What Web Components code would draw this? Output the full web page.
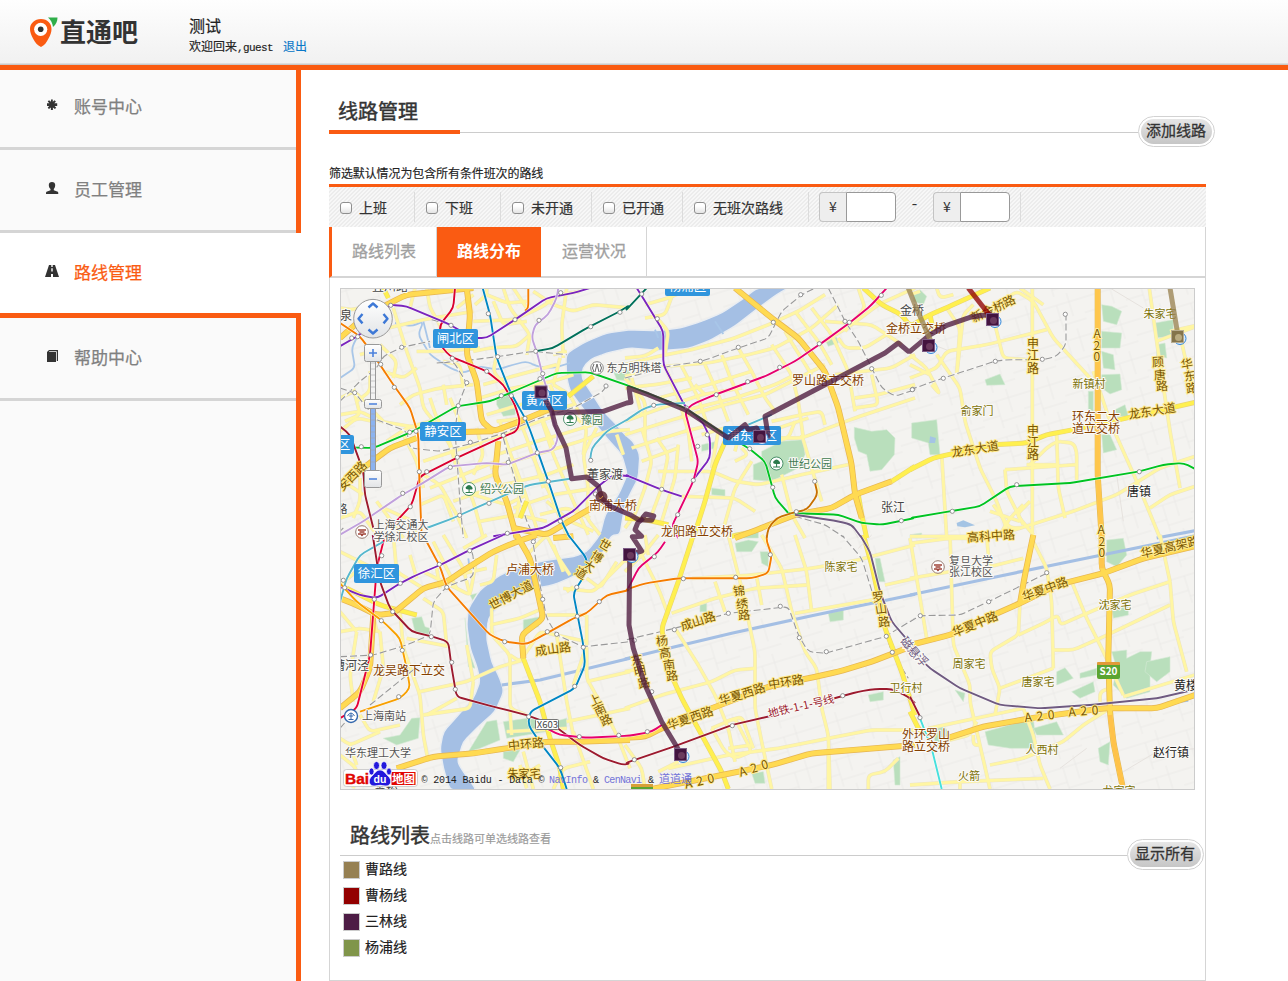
<!DOCTYPE html>
<html lang="zh-CN">
<head>
<meta charset="utf-8">
<title>线路管理 - 直通吧</title>
<style>
html,body{margin:0;padding:0;background:#fff}
body{font-family:"Noto Sans CJK SC",sans-serif;color:#333;width:1288px;height:981px;overflow:hidden}
</style>
</head>
<body>
<bus-app></bus-app>
<script>
const define = (name, html, setup) => customElements.define(name, class extends HTMLElement {
  constructor() {
    super();
    const t = document.createElement('template');
    t.innerHTML = html;
    this.attachShadow({mode: 'open'}).appendChild(t.content.cloneNode(true));
  }
  connectedCallback() { if (setup) setup(this, this.shadowRoot); }
});

define('app-header', `<style>
:host{display:flex;box-sizing:border-box;height:70px;border-bottom:5px solid #f95a10;background:linear-gradient(#fefefe,#f1f1f1 63px,#c9c9c9 64px);}
.logo{display:flex;width:189px;padding:16px 0 0 29px;box-sizing:border-box;color:#333}
.logo svg{width:31px;height:33px;flex:none}
.logo b{font-size:26px;line-height:30px;font-weight:700}
.who{padding-top:15px;white-space:nowrap}
.name{font-size:16px;line-height:20px;color:#222;-webkit-text-stroke:.2px}
.hi{font-size:12px;line-height:20px;color:#222;padding-top:1px;-webkit-text-stroke:.15px}
.hi span{font:11px/20px "Liberation Mono",monospace;letter-spacing:-.6px}
.hi a{color:#0a78c8;margin-left:10px;font-size:12px}
</style>
<div class="logo"><svg viewBox="0 0 31 33"><path d="M19 1.5h9.500c0 4-1.500 7-4.500 9.500-.5-4-2-7-5-9.500z" fill="#2fae4a"/><path d="M12 3C5.500 3 1 7.500 1 13c0 3 1.200 6 3 9.500 2 4 4.500 7 8 8.500 3.500-1.500 5.500-4.500 7.500-8.500 2-3.500 3-6.500 3-9.500C22.500 7.500 18.500 3 12 3z" fill="#fa5b12"/><circle cx="11.700" cy="13.300" r="6.600" fill="#fff"/><circle cx="11.700" cy="13.300" r="2.800" fill="#2e3335"/></svg><b>直通吧</b></div>
<div class="who"><div class="name">测试</div><div class="hi">欢迎回来<span>,guest</span><a>退出</a></div></div>`);

const ICONS = {
  cog: '<path d="M6 .5h1.800v2.300L9.600 1.200l1.300 1.300L9.300 4.300h2.900v2.600H9.600l1.600 1.900-1.300 1.300-2-1.700V11H5.900V8.500l-1.900 1.600-1.300-1.300 1.500-1.900H2V4.300h2.400L2.700 2.500 4 1.200l2 1.600z"/>',
  user: '<path d="M3.800 3C3.800 1 5 0 7 0s3.200 1 3.200 3c0 1.800-.7 3.300-1.400 3.900v1.400l4 1.400c.4.300.5 1.200.5 2.300H1c0-1.100.1-2 .5-2.300l4-1.400V6.900C4.600 6.300 3.800 4.800 3.800 3z"/>',
  road: '<path d="M4 0h2.300v2h1.400V0H10l4 12H8V9H6v3H0zM6.300 3.300v3.200h1.400V3.300z" fill-rule="evenodd"/>',
  book: '<path d="M2 2l2-2h9v11h-1.200V1.300H4.500L3.800 2H11v10H2z"/>'
};
define('nav-item', `<style>
:host{display:block;box-sizing:border-box;height:83px;background:#fafafa;border-right:5px solid #fa5b12;color:#808080;font-size:17px;line-height:26px;-webkit-text-stroke:.25px}
.row{display:flex;box-sizing:border-box;height:100%;border-bottom:3px solid #d5d5d5;padding:26px 0 0 45px}
:host([first]){height:80px}
:host([first]) .row{padding-top:23px}
:host([active]){height:85px;background:#fff;color:#fa5b12;border-right:0}
:host([active]) .row{border-bottom:5px solid #fa5b12}
svg{width:14px;height:12px;fill:#333;margin:6px 15px 0 0}
</style><div class="row"><svg viewBox="0 0 14 12"></svg><slot></slot></div>`, (el, r) => { r.querySelector('svg').innerHTML = ICONS[el.getAttribute('icon')]; });

define('side-nav', `<style>:host{display:flex;flex-direction:column;width:301px;flex:none}
.rest{flex:1;background:#fafafa;border-right:5px solid #fa5b12}</style>
<nav-item first icon="cog">账号中心</nav-item><nav-item icon="user">员工管理</nav-item><nav-item active icon="road">路线管理</nav-item><nav-item icon="book">帮助中心</nav-item><div class="rest"></div>`);

define('pill-button', `<style>:host{display:block;box-sizing:border-box;width:77px;height:31px;border:1px solid #d2d2d2;border-radius:16px;padding:2px;background:#fff;font-size:15px;line-height:22px;text-align:center;color:#333;-webkit-text-stroke:.3px;white-space:nowrap}
div{border-radius:13px;height:25px;background:linear-gradient(#e6e6e6,#c6c6c6)}
span{margin:0 -4px 0 -5px}</style><div><span><slot></slot></span></div>`);

define('filter-check', `<style>:host{display:flex;box-sizing:border-box;height:30px;align-items:center;font-size:14px;line-height:20px;-webkit-text-stroke:.2px;color:#333;padding:0 0 1px 11px;border-right:1px solid #dcdcdc;white-space:nowrap}
i{box-sizing:border-box;width:12px;height:12px;border:1px solid #8f8f8f;border-radius:3px;background:linear-gradient(#fff 30%,#e4e4e4);margin:3px 7px 0 0}</style><i></i><slot></slot>`);
define('price-input', `<style>:host{display:flex;box-sizing:border-box;width:77px;height:30px;font-size:14px}
span{box-sizing:border-box;width:27px;border:1px solid #c4c4c4;border-right:0;border-radius:4px 0 0 4px;background:#eee;text-align:center;line-height:26px;font-family:"Noto Sans CJK SC"}
i{box-sizing:border-box;flex:1;border:1px solid #999;border-radius:0 4px 4px 0;background:#fff}</style><span>¥</span><i></i>`);

define('filter-bar', `<style>
:host{display:flex;box-sizing:border-box;height:43px;border-top:3px solid #fa5b12;padding-top:5px;background:repeating-linear-gradient(135deg,#ececec 0 1.500px,#f7f7f7 1.500px 2.830px)}
.prices{display:flex;box-sizing:border-box;width:212px;height:30px;padding-left:10px;border-right:1px solid #dcdcdc;align-items:center}
.dash{width:37px;text-align:center;line-height:24px;font-family:"Liberation Mono",monospace;font-size:15px;padding-bottom:3px}
</style>
<filter-check style="width:86px">上班</filter-check><filter-check style="width:86px">下班</filter-check><filter-check style="width:91px">未开通</filter-check><filter-check style="width:91px">已开通</filter-check><filter-check style="width:126px">无班次路线</filter-check>
<div class="prices"><price-input></price-input><span class="dash">-</span><price-input></price-input></div>`);

define('tab-strip', `<style>
:host{display:flex;box-sizing:border-box;height:51px;border-bottom:2px solid #d5d5d5;border-right:1px solid #d5d5d5;border-left:3px solid #fa5b12;font-size:16px;line-height:47px;color:#a0a0a0;-webkit-text-stroke:.3px}
div{box-sizing:border-box;width:105px;text-align:center;border-right:1px solid #d5d5d5}
.on{width:104px;margin-right:1px;background:#fa5b12;color:#fff;font-weight:700;height:50px;border:0;-webkit-text-stroke:0}
</style><div>路线列表</div><div class="on">路线分布</div><div>运营状况</div>`);

define('legend-row', `<style>:host{display:flex;align-items:center;height:26px;font-size:14px;line-height:20px;color:#222;-webkit-text-stroke:.2px}
i{box-sizing:border-box;width:17px;height:18px;border:1px solid #ccc;margin:2px 5px 0 0}
span{padding-bottom:2px}</style><i></i><span><slot></slot></span>`,
 (el, r) => { r.querySelector('i').style.background = el.getAttribute('color'); });

/* ---------- map data: coordinates are thirds of a pixel inside each tile ---------- */
const TILES = {A:[340,288],B:[625,288],C:[910,288],D:[340,535],E:[625,535],F:[910,535]};
const pts = s => { let o, out = []; for (const t of s.trim().split(/\s+/)) { if (TILES[t]) { o = TILES[t]; continue; } const [x,y] = t.split(','); out.push([+(o[0]+x/3).toFixed(1), +(o[1]+y/3).toFixed(1)]); } return out; };
const line = s => 'M' + pts(s).map(p => p.join(' ')).join('L');
const smooth = s => { const p = pts(s); let d = 'M' + p[0].join(' '); for (let i = 1; i < p.length - 1; i++) { const a = p[i], b = p[i+1], q = p[i-1];
  const r = (u,v) => { const L = Math.hypot(v[0]-u[0], v[1]-u[1]) || 1, k = Math.min(5, L/2)/L; return [(u[0]+(v[0]-u[0])*k).toFixed(1), (u[1]+(v[1]-u[1])*k).toFixed(1)]; };
  d += 'L' + r(a,q).join(' ') + 'Q' + a.join(' ') + ' ' + r(a,b).join(' '); } return d + 'L' + p[p.length-1].join(' '); };

const RIVER = 'A 870,125 800,135 740,160 695,185 678,200 678,230 680,270 690,310 720,350 760,400 800,450 845,500 862,560 835,620 795,680 780,741 D 740,50 700,65 620,75 540,95 480,120 420,165 385,220 380,270 390,340 412,400 420,440 400,490 350,545 310,590 300,640 310,700 330,765 410,765 370,710 352,680 370,620 420,570 465,530 492,470 480,430 455,380 440,310 445,250 480,210 560,165 640,150 700,125 740,100 785,60 815,0 A 840,741 B 0,650 15,620 40,570 45,500 25,460 0,440 A 830,410 790,370 745,300 725,270 728,240 750,215 800,195 870,180 B 110,188 190,182 250,160 330,115 400,60 455,20 490,0 395,0 350,35 290,75 230,100 165,120 100,128 0,125';
const CANALS = ['E 0,372 150,335 320,295 560,242 870,178','F 0,180 260,125 550,65 870,0','D 485,450 600,435 870,370','C 740,750 870,725'];
const CREEKS = ['A 165,105 215,115 250,100 235,140 270,200 330,240 370,255 420,235 470,245 520,230 560,220 590,235 640,240 690,225','A 0,270 45,240 35,180 60,130','A 250,100 270,180','B 90,125 100,150','B 270,100 295,138','D 385,70 390,110'];
const GREENS = ['B 410,490 470,460 535,455 540,500 520,540 440,580 385,575 385,530 410,520','B 688,418 740,430 785,425 810,450 808,500 770,545 735,550 725,500 700,490 688,450','A 470,330 510,310 530,350 525,380 490,385 470,350','A 700,270 735,310 770,350 740,340 700,300','A 820,250 870,245 870,280 830,275','C 5,405 80,395 90,500 60,500 55,465 5,450','C 225,275 270,258 285,290 230,292','C 575,50 605,55 635,70 620,110 580,100','C 575,130 635,135 630,180 575,180','C 575,190 610,200 615,245 580,240','C 575,260 630,258 635,305 600,318 575,300','C 535,310 550,310 550,370 535,365','C 735,105 790,95 790,145 735,150','C 740,170 765,165 770,210 740,205','C 575,440 600,440 620,485 580,495','C 615,365 645,350 655,385 620,385','F 590,15 640,10 650,60 620,95 590,80','F 605,215 655,215 655,240 610,250','F 605,350 650,345 650,370 690,350 725,350 720,395 720,470 650,490 610,450 620,400','F 710,380 780,365 780,410 740,440 705,410','F 510,415 560,400 560,420 510,430','F 485,470 550,440 555,470 510,490','F 440,410 465,398 490,430 440,450','F 225,590 280,575 370,550 380,640 300,640 235,630','F 370,580 440,560 460,600 380,600','F 565,640 600,620 595,690 570,680','F 135,465 165,475 160,500','D 385,650 440,560 470,555 480,615 420,640','D 490,560 560,550 640,560 680,550 680,580 500,610','D 130,610 180,600 215,550 240,548 235,610 170,630','D 215,250 245,245 255,275 270,280 270,310 225,290','D 550,255 600,245 595,275 550,290','D 600,120 670,118 665,135 620,150 590,150','D 390,180 430,170 395,230 425,260 440,255 470,200 450,190 400,200','D 375,250 385,340 405,400 385,395','D 490,650 540,645 520,680 490,670','E 405,50 430,50 430,95 410,85','E 750,70 765,70 780,140 760,140','E 610,235 655,225 655,255 615,260','E 225,210 245,205 245,230 225,230','E 380,715 415,710 420,745 390,745','E 805,675 825,665 825,750 810,750','E 730,480 775,470 775,495 735,500','B 600,155 635,148 640,165 610,175','B 260,600 300,605 300,625 260,620','B 230,470 275,460 275,480 230,490','C 10,20 30,5 50,25 40,50 10,40','E 330,25 370,15 400,20 380,50 335,50','B 330,735 400,730 400,750 330,750','C 0,740 35,735 35,750 0,750','F 65,580 100,570 125,605 80,640'];
const PONDS = ['C 140,705 160,697 195,712 165,718 142,715','C 60,445 78,450 75,465 58,465','B 445,515 465,510 460,535 440,540','F 770,500 835,492 835,500 775,508'];
const MINOR = [
'A 0,60 40,65 115,45','A 60,60 65,110','A 160,60 200,190 240,300 250,360 290,410 330,470 350,540','A 210,60 225,0','A 100,130 250,95 400,70','A 260,0 270,60 300,110 310,180','A 405,50 440,20 440,0','A 440,20 500,45 560,40','A 400,100 520,95 600,60 660,20 720,10','A 400,190 450,180 530,175 570,140','A 640,200 680,190','A 490,0 510,60 570,140 560,200','A 660,210 640,290','A 680,0 665,110 670,210','A 0,380 60,370 120,400 240,420','A 0,330 45,310 80,350 130,400','A 90,250 90,310 50,340','A 40,300 60,380 15,400','A 130,250 190,270 230,240','A 180,350 220,320 300,300 400,290','A 310,290 320,350','A 270,330 290,390 320,440 350,520 400,640 430,750','A 310,220 360,230 370,300','A 230,190 310,190 420,180','A 500,300 460,250 470,200','A 430,290 500,270 650,230','A 420,330 520,300 640,280 700,260','A 440,380 540,350 660,320','A 580,280 610,400 640,470','A 630,290 660,360','A 640,290 690,320 720,380','A 470,400 560,390 700,350','A 480,400 490,440 550,600 600,750','A 540,400 560,450 580,510 640,640 680,740','A 600,380 640,500 700,640 745,740','A 460,450 600,400 640,385','A 470,500 590,460 660,440 760,410','A 450,540 620,490 720,460 800,430 870,425','A 490,590 620,560 700,530','A 250,520 400,470 480,440','A 270,600 370,560 470,520','A 340,640 480,590','A 250,560 300,590 350,680 380,750','A 240,650 310,620 340,700','A 190,440 230,520 250,600','A 130,660 220,700 230,750','A 110,640 140,680 190,750','A 10,580 70,620','A 0,690 60,670 110,740','A 520,660 640,620 770,600','A 600,680 680,660 750,690','A 770,420 730,500 745,600 740,690 780,740','A 830,440 850,500','A 40,690 60,640 60,570','A 700,380 740,420 730,500',
'A 0,430 50,390 100,400','A 140,460 200,420 270,400','A 380,440 350,380 330,330','A 410,420 430,500 400,560','A 380,590 460,560','A 400,620 500,650 560,620','A 510,520 540,610 530,690','A 580,500 610,600','A 420,700 530,680 620,700','A 620,640 690,700 760,730','A 350,60 400,20','A 120,170 170,220 160,270','A 60,200 130,180','A 460,40 490,110 560,100','A 580,10 640,50 700,70 760,50 870,60','A 520,0 560,60',
'B 0,230 100,205 200,185 330,150 430,110 520,70 600,20','B 0,265 120,235 250,225 370,200 450,180 560,120 640,50','B 0,300 90,290 200,270','B 0,400 110,360 230,320 350,300','B 0,440 160,390 300,350 420,320 520,270 600,230','B 20,480 180,430 260,410','B 50,520 160,480','B 0,210 60,205 100,180','B 60,50 130,30 200,0','B 98,92 130,130 120,200','B 150,0 120,80 60,90','B 120,235 160,330 190,430 200,520','B 170,235 220,330 250,420','B 240,230 280,320 310,400','B 290,200 320,280 370,380','B 340,180 380,250 420,330 450,370','B 440,170 500,260 520,340 535,450','B 480,130 510,180 560,260','B 510,70 580,160 620,230','B 560,60 620,140 670,250 690,370','B 600,100 740,110 830,170','B 600,160 680,110 760,50 870,0','B 660,130 720,60 700,0','B 640,150 660,180 720,180 800,130','B 630,260 800,240 870,200','B 690,330 760,320 870,290','B 690,360 760,350 740,260','B 440,400 530,380 590,370 600,410','B 330,490 340,450 530,450 690,390 870,330','B 330,520 370,500 350,480','B 230,440 300,420','B 100,550 260,550 330,580 400,590 530,560 670,530','B 50,420 80,520 60,600 30,680 0,720','B 95,450 130,500 110,600 80,680','B 160,470 150,570 110,700','B 170,625 330,630 390,670','B 380,520 330,600 290,740','B 530,440 560,540 590,640','B 470,560 500,680 540,750','B 400,440 550,390','B 450,460 490,450 510,400','B 0,270 60,340 60,450','B 20,270 50,380','B 190,365 330,330 450,290 510,260','B 100,330 250,290 380,250','B 210,290 240,320','B 280,430 260,540',
'C 0,200 50,240 90,320 65,290','C 0,270 80,240 110,190 230,170 410,125','C 110,60 150,120 140,260','C 140,260 160,80 190,50','C 80,200 150,300 165,400 210,540 260,640 300,750','C 250,90 280,210 350,215','C 250,60 320,10 370,40 430,150 540,270 550,280','C 330,0 400,50','C 367,0 367,750','C 550,250 600,400 680,580 750,750','C 718,0 740,160 780,430 810,600','C 780,130 870,110','C 740,160 860,115','C 810,140 830,230 860,340','C 95,500 110,750','C 285,545 500,530','C 285,545 290,610 340,710','C 360,530 410,480 440,460 490,465 500,490 500,575','C 440,440 445,600 465,690','C 870,500 750,540 620,620 490,670 300,730','C 720,660 780,620 870,590','C 340,650 300,690 270,740','C 360,640 320,680 370,740','C 240,670 330,700','C 250,650 300,720 330,720','C 0,745 180,745 270,740','C 0,20 30,10','C 80,0 90,30 130,20','C 440,530 350,530','C 0,230 60,260',
'D 0,50 80,90 120,110','D 0,290 60,280 120,290','D 0,230 50,290','D 50,290 30,420 40,500','D 120,290 130,400 100,500','D 250,190 310,230 320,330','D 180,230 190,340 240,480 250,600 265,680','D 200,310 330,335','D 240,470 380,440 480,395 550,375','D 250,540 390,520 400,440','D 260,540 350,490','D 310,0 370,100 390,180','D 250,110 390,180 410,70','D 160,0 170,110 250,160','D 280,20 350,160','D 370,40 440,0','D 420,150 460,140 470,60','D 450,270 540,250 610,220','D 455,220 455,300 510,360 510,520 560,540','D 510,360 540,380 600,290 740,320','D 560,60 620,0 650,60 690,120','D 640,30 670,110','D 670,160 760,170 870,60','D 680,170 700,155','D 740,130 780,160 830,80','D 600,240 740,240','D 650,300 680,500 700,600','D 740,240 740,430 790,520 830,600 870,700','D 740,330 700,450','D 740,440 870,410','D 680,560 870,520','D 510,530 515,600','D 500,590 680,580','D 700,590 760,762','D 380,330 400,440','D 0,610 30,630 120,590','D 30,630 50,690','D 60,540 90,590 180,570','D 350,120 440,100','D 520,740 600,690','D 550,650 580,762','D 640,762 670,700 750,680','D 100,240 110,290','D 290,100 300,160','D 0,150 60,100 130,110','D 210,60 230,130','D 560,760 540,690','D 0,660 50,700 40,760',
'E 310,0 350,160 390,350 390,520 410,620 440,762','E 410,0 470,100 500,230 540,350 575,400 590,520 610,600 615,762','E 510,0 545,110 560,230','E 140,235 270,190 390,160 545,150','E 200,130 380,120 560,100 700,75 870,30','E 50,60 100,160 130,240','E 0,110 60,50 100,0','E 60,0 70,60','E 270,140 300,230','E 395,125 410,210','E 510,235 740,195','E 780,150 870,130','E 150,280 220,390 270,480 310,580 330,680','E 390,400 330,405 260,440 110,480 0,520','E 0,410 50,400','E 260,580 330,550 340,570 380,650 330,670 300,650 260,580','E 300,560 350,545 385,640','E 310,640 380,630','E 130,700 310,660 460,640 610,610 740,585 870,585','E 0,630 50,700 60,762','E 610,640 610,762','E 730,762 730,720 780,710 820,670','E 100,710 160,680','E 0,80 40,60',
'F 0,10 50,310','F 120,0 130,330 180,450 180,500 240,762','F 230,0 235,60 240,90','F 0,25 120,10 230,10','F 0,130 120,110','F 370,20 410,100 425,200 430,400','F 240,95 340,70','F 330,200 325,300 240,350 245,400 270,460 255,540','F 325,300 400,265 445,240 450,270 530,235 660,180 780,140','F 430,345 490,345 570,310 780,210','F 485,140 530,250 580,350 640,480','F 270,460 430,400','F 780,140 750,0','F 780,140 790,260 830,410','F 640,485 870,415','F 55,580 340,520','F 190,600 190,630 210,630','F 340,520 370,600 390,690 420,762','F 240,690 340,670 460,620 520,570 600,520','F 0,750 150,740 400,730','F 100,620 180,600 200,560','F 150,745 150,762','F 570,500 570,470 600,460'];
const STREETS = ['B 700,750 670,700 600,690','A 300,120 330,160','A 0,180 100,80','E 740,0 700,40','F 640,710 740,650 870,640','F 450,700 530,640','C 20,150 120,190','C 600,0 700,60','C 620,560 640,700'];
const MAJOR = ['B 715,0 770,50 830,80 C 0,115 60,80 130,50 240,0','C 70,130 60,80','B 305,450 270,530 240,640 205,750 E 205,0 160,140 110,280 130,400 170,490 230,600 290,710 310,762','C 0,545 70,510 250,470 350,465 410,440 490,425 650,390 870,340','A 685,325 760,265','B 390,730 320,745','A 145,30 130,0','D 550,370 600,500 630,610 660,700 670,762','E 715,0 740,90 760,180 780,280 830,410 870,540','D 20,160 120,210 230,240','B 700,620 710,680 725,750','B 800,580 870,535','A 540,690 560,640','F 0,530 30,590 80,600','B 0,690 60,695 130,710'];
const HIGH = ['A 0,150 80,80 200,20 400,0','A 380,0 390,80 380,200 410,280 425,400 460,430 540,400 660,350','A 460,430 350,432 260,430','A 0,590 70,540 150,480 230,450','A 475,460 465,560 500,640 530,750','D 0,190 50,210 110,240 160,235 250,160 320,140 380,100 460,50 530,20 590,0','D 530,0 570,70 590,160 610,250 545,300 550,370','A 520,720 620,740 720,680 790,640','B 330,0 440,90 520,150 600,250 640,360 680,530 690,620 710,690','B 330,750 410,720 510,680 620,660 690,620 800,580','C 563,0 563,560 575,750 F 575,100 600,150 595,370 600,530 610,620 640,765','D 0,520 60,470 90,400 100,240','D 170,700 280,665 400,655 500,640 620,620 720,620 870,615','E 0,608 60,605 110,580 260,520 430,455 550,430 640,410 740,380 870,330','F 0,330 120,300 250,240 330,205 440,150 580,115 700,70 870,30','F 370,0 345,120 330,205','E 80,762 280,722 440,690 560,655 870,630','F 110,610 220,575 360,550 580,520 740,520 870,475','A 700,745 640,750'];
const SUBWAY = [
['#d9002f','A 345,0 340,60 300,110 300,170 330,205 440,250 490,290 525,350 540,400 530,430 480,450 350,510 240,565 215,650 160,710'],
['#e60039','D 135,0 110,100 90,360 50,520 0,550'],
['#0086c3','A 428,0 450,80 470,210 510,310 560,400 575,440 625,580 665,700 690,750','D 685,0 740,70 740,110 700,175 730,330 735,390 705,460 570,530 565,570 605,630 660,700 680,762'],
['#f57c00','A 0,105 60,145 100,200 160,290 210,360 235,440 238,570 245,750','A 565,0 565,60 555,68','D 260,20 300,95 320,155 450,300 495,320 560,328 620,295 700,250 740,235 800,180 870,165 E 0,165 60,145 160,130 380,130 430,115 440,60 425,20 425,0'],
['#7a24bd','A 0,175 60,140 150,50 200,55 330,110 400,150 440,150 525,95 620,30 700,15 750,0','A 460,745 610,720 700,670 780,590 820,560 870,565 B 0,560 110,605 170,625','D 0,155 60,180 110,190 180,145 230,120 300,90 390,45 490,0','B 35,0 60,40 115,130 115,230 180,355 235,405 255,450 255,510 205,575'],
['#00c322','A 0,478 100,480 220,430 350,355 450,340 510,315 650,255 750,253 870,295 B 180,360 300,440 370,480 420,520 440,590 450,630 490,675','B 490,675 640,680 710,705 770,710 870,690 C 0,690 120,670 210,655 300,595 480,585 690,550 760,530 820,525 860,545'],
['#c0a0dc','A 655,0 650,30 625,80 585,110 575,150 590,190 610,270 620,300 635,380 655,450 640,485 590,495 500,530 440,525 330,535 240,590 180,625 70,700 0,740'],
['#00705a','A 587,190 640,180 740,120 840,70 870,50 B 0,70 65,0'],
['#56b7cd','A 750,520 755,480 800,430 870,390 B 0,400 50,365 90,350 180,345','A 690,572 570,590 520,610 430,650 340,690 260,720','B 370,410 440,380','D 130,20 60,60 20,130 0,200'],
['#9c1a2e','A 0,415 30,440 70,550 75,620 100,720','D 98,0 120,140 150,220 215,290 280,305 325,320 335,400 350,485 460,515 560,540 640,570 720,630 790,670 850,690 870,685 E 0,685 160,630 320,570 450,540','E 620,492 700,470 750,462 800,462 850,485 870,505','F 0,485 30,545'],
['#e6006e','B 160,750 140,715 205,580 220,520 180,370 200,350 270,320 420,265 510,220 590,165 680,100 740,50 785,0','A 870,0 870,1','E 120,20 100,50 40,100 10,160','D 620,580 660,600 740,608 870,602 E 80,590 110,570'],
['#f8a000','D 0,145 50,200 130,260 180,310 200,400 210,460 180,490 60,530'],
['#c87000','B 570,585 578,620 545,665 500,675 455,690 430,720 425,750'],
['#6f5a80','B 510,680 640,700 680,710 710,750 E 705,0 735,50 765,170 800,260 860,330 F 20,360 60,400 150,460 270,510 390,520 540,510 740,490 870,460'],
['#46e0dd','F 30,550 65,640 95,762']];
const RAILS = ['A 0,340 60,280 110,240 130,205 185,178 270,160','A 290,225 400,215 480,205 580,190 680,200','A 310,225 340,220 380,285 355,350 345,430 360,640 370,750','A 110,395 200,430 210,480 300,490 400,465 490,435 600,390 700,360 790,310 800,290','A 275,95 330,110','A 490,450 560,700 590,762','A 0,300 45,315 110,395','B 0,270 40,260 130,235 230,220 340,180 430,150 470,70 530,20 570,0','B 610,0 660,100 700,160 740,240 770,300 810,325 870,305','C 0,305 100,270 255,220 290,215 400,215 440,205 468,170 468,80','D 0,365 100,360 200,330 270,300 280,200 320,155 400,125 400,60 390,40','D 575,0 600,150 620,250 650,300 730,335 870,320 E 0,315 150,280 310,235 400,225 490,215 520,300 550,350 600,355 780,305 870,250','F 0,260 30,242 150,240 235,200 410,115','B 510,685 600,710 660,750 E 650,0 710,70 760,230 800,350 850,430','D 90,510 250,380','A 10,720 0,730','D 0,580 30,545'];
const STOPS = 'A 152,52 333,112 445,77 525,95 662,14 597,97 752,116 840,73 185,178 337,211 440,250 473,206 587,190 122,229 163,298 380,284 44,314 600,272 608,257 484,323 514,323 355,353 555,391 391,463 490,442 209,433 228,430 64,476 352,508 592,494 752,517 505,523 331,538 238,551 260,551 188,616 211,656 447,646 359,682 625,580 661,700 502,736 766,618 798,294 35,150 53,146 B 50,18 97,92 445,103 527,20 660,100 673,103 769,22 583,167 340,178 226,220 464,238 368,281 274,320 184,360 86,352 740,242 863,304 247,440 218,475 374,482 443,598 205,577 110,604 158,680 569,580 514,671 829,698 C 466,79 397,214 256,220 100,271 7,305 320,590 127,670 688,551 D 580,20 389,47 125,62 298,88 10,136 14,158 181,145 320,157 103,193 158,230 608,193 710,157 778,200 124,257 712,244 187,346 274,305 92,360 335,382 494,320 622,290 650,298 730,337 346,463 176,485 704,454 566,545 718,605 836,601 662,698 E 88,65 436,59 332,127 175,131 466,214 310,235 148,284 28,316 523,308 604,350 784,304 802,352 653,482 80,470 322,572 67,590 28,674 F 410,113 236,200 31,242 30,548';

const K='#444',BR='#853f00',RD='#7a5600',OL='#7d7208',PO='#555';
const LABELS = [['宜川路',390,287,K,12],['泉',346,316,K,12],['董家渡',605,475,K,12],['张江',893,508,K,12],['唐镇',1139,492,'#222',12],['赵行镇',1171,753,'#222',12],['黄楼',1186,686,'#222',12],['漕河泾',351,666,K,12],['路',342,509,K,11],['金桥',912,311,K,12],
['东方明珠塔',634,368,PO,11],['豫园',592,420,'#3f7a50',11],['绍兴公园',502,489,'#3f7a50',11],['世纪公园',810,464,'#3f7a50',11],['上海交通大',401,525.5,PO,11],['学徐汇校区',401,537,PO,11],['上海南站',384,716,PO,11],['华东理工大学',378,753,PO,11],['复旦大学',971,561,PO,11],['张江校区',971,572,PO,11],
['南浦大桥',613,506,BR,12],['卢浦大桥',530,570,BR,12],['龙吴路下立交',409,671,BR,12],['龙阳路立交桥',697,532,BR,12],['罗山路立交桥',828,381,BR,12],['金桥立交桥',916,329,BR,12],['环东二大',1096,417,BR,12],['道立交桥',1096,429,BR,12],['外环罗山',926,735,BR,12],['路立交桥',926,747,BR,12],
['陈家宅',841,567,OL,11],['卫行村',906,688,OL,11],['俞家门',977,411,OL,11],['新镇村',1089,384,OL,11],['朱家宅',1160,314,OL,11],['沈家宅',1115,605,OL,11],['周家宅',969,664,OL,11],['唐家宅',1038,682,OL,11],['人西村',1042,750,OL,11],['火箭',969,776,OL,11],['龙家宅',1119,791,OL,11],['朱家宅',524,774,RD,11],['莘松',386,791,K,12],
['世博大道',511,595,RD,12,-28],['成山路',553,649,RD,12,-8],['安西路',352,476,RD,12,-45],['中环路',526,744,RD,12,-6],['成山路',698,621,RD,12,-18],['华夏西路',690,718,RD,12,-19],['华夏西路',742,694,RD,12,-17],['中环路',786,682,RD,12,-9],['龙东大道',975,449,RD,12,-9],['龙东大道',1152,411,RD,12,-9],['高科中路',991,536,RD,12,-4],['华夏高架路',1170,547,RD,12,-13],['华夏中路',1045,589,RD,12,-20],['华夏中路',975,624,RD,12,-22],['地铁-1-1-号线',801,706,'#9c1a2e',11,-13],['A 2 0',1040,716,RD,12,-6,1],['A 2 0',1084,711,RD,12,-4,1],['A 2 0',754,768,RD,12,-17,1],['A 2 0',700,781,RD,12,-13,1]];
const VERT = [['申江路','1033,344 1033,356 1033,369'],['申江路','1033,431 1033,443 1033,455'],['A20','1097,334 1097,346 1097,357'],['A20','1101,530 1102,542 1102,553'],['顾唐路','1158,362 1160,375 1162,386',-4],['华东路','1187,364 1190,376 1192,388',-10],['锦绣路','739,591 742,604 744,615',-5],['杨高南路','662,641 665,653 669,665 672,676',-8],['东明路','637,660 640,671 644,683',-12],['罗山路','878,597 881,609 884,622',-8],['上南路','595,700 600,710 606,720',-25],['世博大道','605,545 597,557 589,566 581,573',32],['新金桥路','977,316 988,311 999,306 1009,301',-25],['磁悬浮','907,643 914,652 922,660',50]];
const BADGES = [['闸北区',433,329,45],['静安区',420,422,46],['黄浦区',522,391,45],['浦东新区',723,426,58],['杨浦区',665,277,45],['徐汇区',354,564,45],['长宁区',309,435,45]];
const ROUTES = [['#4d1a3d','A 605,315 635,370 645,410 678,480 695,572 740,567 775,595 785,630 810,655 870,680 B 40,695 80,697 86,684 62,678 52,690','B 55,690 38,705 30,725 50,745 E 22,5 50,48 14,58 12,270 25,340 60,450 110,560 170,660','A 635,375 720,372 790,370 860,345 B 18,343 12,300 70,320 180,365 310,450 360,410 370,425 395,420 405,445 430,445 420,385 600,290 780,195 820,165 850,190 C 0,190 60,140 110,112 180,88 245,78'],['#8f0000','C 175,0 247,92'],['#9a8352','B 850,0 870,50 C 65,165','C 780,0 805,148']];
const MARKS = [[541.5,392.5],[993,320],[929,346],[760,437],[630,555],[681,755],[1178,337,1]];

define('route-map', `<style>:host{display:block;box-sizing:border-box;width:855px;height:502px;border:1px solid #ccc;overflow:hidden}
svg{display:block;width:853px;height:500px;font-family:"Noto Sans CJK SC",sans-serif}
path{stroke-linejoin:round}.mono{font-family:"Liberation Mono",monospace}</style><svg viewBox="341 289 853 500"></svg>`, (el, r) => {
  const T = (s,x,y,c,z,rot=0,hi=0) => `<text x="${x}" y="${y+z*.36}" font-size="${z}" fill="${c}" text-anchor="middle" ${rot?`transform="rotate(${rot} ${x} ${y})"`:''} ${hi?'letter-spacing="1"':''} stroke="${c===RD?'#ffe98a':'#fbfaf7'}" stroke-width="2" stroke-linejoin="round" paint-order="stroke">${s}</text>`;
  const P = (d,c,w,x='') => `<path d="${d}" fill="none" stroke="${c}" stroke-width="${w}" ${x}/>`;
  let h = `<defs><pattern id="lot" width="43" height="37" patternUnits="userSpaceOnUse" patternTransform="rotate(-17)"><path d="M0 9H43M0 24H18M18 9V37M31 0V24M18 30H43" stroke="#eae8e6" stroke-width=".8" fill="none"/></pattern></defs><rect x="340" y="288" width="856" height="503" fill="#f4f3f0"/><rect x="340" y="288" width="856" height="503" fill="url(#lot)"/>`;
  h += GREENS.map(g => `<path d="${line(g)}Z" fill="#b9dfbc" stroke="#d5ead5" stroke-width=".6"/>`).join('');
  h += `<path d="${smooth(RIVER)}Z" fill="#a4bfe4" stroke="#e9edf2" stroke-width="1.500"/>`;
  h += PONDS.map(g => `<path d="${line(g)}Z" fill="#a4c4e4"/>`).join('');
  h += CANALS.map(c => P(line(c),'#a4bfe4',3.2)).join('') + CREEKS.map(c => P(smooth(c),'#a8c6e8',1.8)).join('');
  h += STREETS.map(c => P(smooth(c),'#e6e2de',1)).join('');
  h += MINOR.map(c => P(smooth(c),'#ece4c4',3.8)).join('') + MINOR.map(c => P(smooth(c),'#fff6a3',2.8)).join('');
  h += RAILS.map(c => P(smooth(c),'#f7f6f4',2)+P(smooth(c),'#999',1.1,'stroke-dasharray="7 3"')).join('');
  h += MAJOR.map(c => P(smooth(c),'#e9d573',5)).join('') + MAJOR.map(c => P(smooth(c),'#fff04f',3.8)).join('');
  h += HIGH.map(c => P(smooth(c),'#e6b552',6)).join('') + HIGH.map(c => P(smooth(c),'#ffda52',4.6)).join('');
  h += P(line('C 563,0 563,560 575,750 F 575,100'),'#ffc64c',4.4) + P(line('F 600,540 612,630 640,765'),'#ffc24a',4.4);
  for (const [c, ...ls] of SUBWAY) for (const l of ls) h += P(smooth(l),'#fff',3,'opacity=".7"') + P(smooth(l),c,1.9);
  h += pts(STOPS).map(p => `<circle cx="${p[0]}" cy="${p[1]}" r="2.100" fill="#fff" stroke="#888" stroke-width=".9"/>`).join('');
  h += BADGES.map(([s,x,y,w]) => `<rect x="${x}" y="${y}" width="${w}" height="19" rx="2" fill="#3095dd"/><text x="${x+w/2}" y="${y+14}" font-size="12.500" fill="#fff" text-anchor="middle">${s}</text>`).join('');
  h += LABELS.map(l => T(...l)).join('');
  h += VERT.map(([s,p,a=0]) => {
    const q = p.split(' ').map(v => v.split(',').map(Number)), m = s==='磁悬浮', w = s==='A20' ? 3.5 : 6, k = a*Math.PI/180;
    const ox = w*Math.cos(k)+4.3*Math.sin(k), oy = w*Math.sin(k)-4.3*Math.cos(k);
    return `<text x="${q.map(v=>(v[0]-ox).toFixed(1)).join(' ')}" y="${q.map(v=>(v[1]-oy).toFixed(1)).join(' ')}" ${a?`rotate="${a}"`:''} font-size="12" fill="${m?'#6f5a80':RD}" stroke="${m?'#fbfaf7':'#ffed9a'}" stroke-width="2" paint-order="stroke">${s}</text>`; }).join('');
  h += `<rect x="535.500" y="719.500" width="23" height="10" rx="1" fill="#fff" stroke="#777"/><text x="547.500" y="728" font-size="9.500" fill="#444" text-anchor="middle">X603</text><rect x="1097" y="663" width="23" height="16" rx="2" fill="#5ba531"/><rect x="1097" y="662" width="23" height="3" rx="1" fill="#e29a38"/><text x="1108.500" y="675" font-size="10" font-weight="700" fill="#fff" text-anchor="middle">S20</text><rect x="631" y="784" width="22" height="9" rx="2" fill="#5ba531"/><rect x="631" y="784" width="22" height="3" fill="#d8a038"/>`;
  for (const [x,y] of [[570,419],[469,489],[776.5,463.5]]) h += `<circle cx="${x}" cy="${y}" r="6.500" fill="#fff" stroke="#38825a" stroke-width=".9"/><path d="M${x-3} ${y-2}q3-4 6 0q2 3-2.400 2.500V${y+3}h3v1h-7v-1h3v-2.500q-4 0-2.600-3z" fill="#2b7a4c"/>`;
  for (const [x,y] of [[362,532],[938,567]]) h += `<circle cx="${x}" cy="${y}" r="6.300" fill="#fff" stroke="#96786e"/><path d="M${x-4} ${y-2}h8M${x-2.500} ${y}h5M${x-4} ${y+2}h3l1 1.500 1-1.500h3" stroke="#a04438" stroke-width="1.500" fill="none"/>`;
  h += `<circle cx="597" cy="368" r="6.300" fill="#fff" stroke="#888"/><path d="M594 364q-3 4 0 8M600 364q3 4 0 8M595 372l2-8 2 8" stroke="#666" fill="none"/><circle cx="351" cy="716" r="6.500" fill="#fff" stroke="#3468ad" stroke-width="1.400"/><path d="M347.500 716q3.500-6 7 0M351 713v6M348.500 719.500h5M349 716h4" stroke="#3468ad" fill="none"/>`;
  for (const [c, ...ls] of ROUTES) for (const l of ls) h += P(line(l),c,5,'opacity=".78"');
  h += `<circle cx="601.500" cy="497" r="6" fill="#5b2430" opacity=".8"/><path d="M599 498q2 2 4-2" stroke="#d0903a" fill="none"/>`;
  h += MARKS.map(([x,y,t]) => `<circle cx="${x+2}" cy="${y+1.500}" r="6" fill="#d9eaff" stroke="#3588d8"/><rect x="${x-6.500}" y="${y-6.500}" width="12" height="12" fill="${t?'#84744b':'#43143f'}" stroke="${t?'#b8ad91':'#7d5c85'}"/><circle cx="${x+.5}" cy="${y+.5}" r="3.500" fill="${t?'#b9ab81':'#6b3a5e'}"/>`).join('');
  h += `<defs><linearGradient id="wheel" x1="0" y1="0" x2="0" y2="1"><stop stop-color="#fff"/><stop offset="1" stop-color="#e2e4e6"/></linearGradient></defs><circle cx="373" cy="318.700" r="19.300" fill="url(#wheel)" stroke="#9a9a9a"/><path d="M368.500 307.500l4.500-4 4.500 4M368.500 329.500l4.500 4 4.500-4M362.500 314l-4 4.700 4 4.700M383.500 314l4 4.700-4 4.700" fill="none" stroke="#3d78d6" stroke-width="2.400"/>
<rect x="370.500" y="360" width="5" height="113" fill="#f2f2f2" stroke="#999"/><rect x="371" y="408" width="4" height="64" fill="#8cb3f0"/><path d="M371 363h4M371 369h4M371 375h4M371 381h4M371 387h4M371 393h4M371 414h4M371 420h4M371 426h4M371 432h4M371 438h4M371 444h4M371 450h4M371 456h4M371 462h4" stroke="#aaa" stroke-width=".6"/>
<g fill="url(#wheel)" stroke="#999"><rect x="364.500" y="344.500" width="17" height="17" rx="2"/><rect x="364.500" y="399.500" width="17" height="9" rx="2"/><rect x="364.500" y="470.500" width="17" height="17" rx="2"/></g><path d="M369 353h8M373 349v8M369 404h8M369 479h8" stroke="#4a80dc" stroke-width="1.600"/>`;
  h += `<rect x="343.500" y="769.500" width="74" height="17" rx="3" fill="#fff" stroke="#bbb" stroke-width=".7"/><text x="345" y="783.500" font-size="15" font-weight="700" fill="#e10602" stroke="#e10602" stroke-width=".4" font-family="Liberation Sans" textLength="24" lengthAdjust="spacingAndGlyphs">Bai</text><rect x="391.500" y="772" width="24" height="13" fill="#e10602"/><text x="403.500" y="783" text-anchor="middle" font-size="11.500" font-weight="700" fill="#fff">地图</text>
<g fill="#2319dc" stroke="#fff" stroke-width=".7"><path d="M380 770c4 0 5.500 4 8.500 6.500 3.500 3 3 9.500-2.500 9.500-3 0-4-.7-6-.7s-3 .7-6 .7c-5.500 0-6-6.500-2.500-9.500 3-2.500 4.500-6.500 8.500-6.500z"/><ellipse cx="376.500" cy="765.500" rx="3" ry="4"/><ellipse cx="384" cy="765.500" rx="3" ry="4"/><ellipse cx="371.500" cy="771.500" rx="2.500" ry="3.500"/><ellipse cx="389" cy="771.500" rx="2.500" ry="3.500"/></g><text x="380" y="783" text-anchor="middle" font-size="10.500" font-weight="700" fill="#fff" font-family="Liberation Sans">du</text>
<g font-size="10" fill="#222"><text class="mono" x="421.500" y="782.500" textLength="123">© 2014 Baidu - Data ©</text><text class="mono" x="549" y="782.500" fill="#7272d8" textLength="39">NavInfo</text><text class="mono" x="593" y="782.500">&amp;</text><text class="mono" x="604" y="782.500" fill="#7272d8" textLength="38">CenNavi</text><text class="mono" x="648" y="782.500">&amp;</text><text x="659" y="783" font-size="11" fill="#7272d8">道道通</text></g>`;
  r.querySelector('svg').innerHTML = h;
});

define('bus-app', `<style>
:host{display:flex;flex-direction:column;width:1288px;height:981px;overflow:hidden}
.body{display:flex;flex:1;min-height:0}
main{box-sizing:border-box;width:914px;padding:0 0 0 28px;display:flex;flex-direction:column}
.title{display:flex;height:77px;box-sizing:border-box;width:886px}
h1{margin:0;box-sizing:border-box;width:131px;height:64px;padding:26px 0 0 9px;font-size:20px;line-height:30px;font-weight:400;-webkit-text-stroke:.45px;color:#333;border-bottom:4px solid #fa5b12}
.title hr{flex:1;height:1px;background:#ccc;border:0;margin:62px 0 0}
.title pill-button{margin-top:46px}
.note{font-size:12px;line-height:18px;color:#222;height:18px;margin:17px 0 2px;letter-spacing:-.1px;-webkit-text-stroke:.15px}
filter-bar,tab-strip,.panel{width:877px}
.panel{box-sizing:border-box;height:703px;border:1px solid #d5d5d5;border-top:0;padding:10px 0 0 10px}
.head{display:flex;height:49px;padding-top:32px;align-items:flex-start}
.lead{box-sizing:border-box;flex:1;height:34px;border-bottom:1px solid #ccc;padding-left:10px;white-space:nowrap;line-height:25px;font-size:20px;-webkit-text-stroke:.45px}
.lead small{font-size:11px;color:#999;-webkit-text-stroke:.15px}
.head pill-button{margin:17px 1px 0 0}
.list{padding-left:3px;margin-top:-15px;display:flex;flex-direction:column;width:200px}
</style>
<app-header></app-header>
<div class="body"><side-nav></side-nav><main>
<div class="title"><h1>线路管理</h1><hr><pill-button>添加线路</pill-button></div>
<div class="note">筛选默认情况为包含所有条件班次的路线</div>
<filter-bar></filter-bar><tab-strip></tab-strip>
<div class="panel"><route-map></route-map>
<div class="head"><div class="lead">路线列表<small>点击线路可单选线路查看</small></div><pill-button>显示所有</pill-button></div>
<div class="list"><legend-row color="#968052">曹路线</legend-row><legend-row color="#930000">曹杨线</legend-row><legend-row color="#4d1c45">三林线</legend-row><legend-row color="#80954a">杨浦线</legend-row></div>
</div></main></div>`);
</script>
</body>
</html>
